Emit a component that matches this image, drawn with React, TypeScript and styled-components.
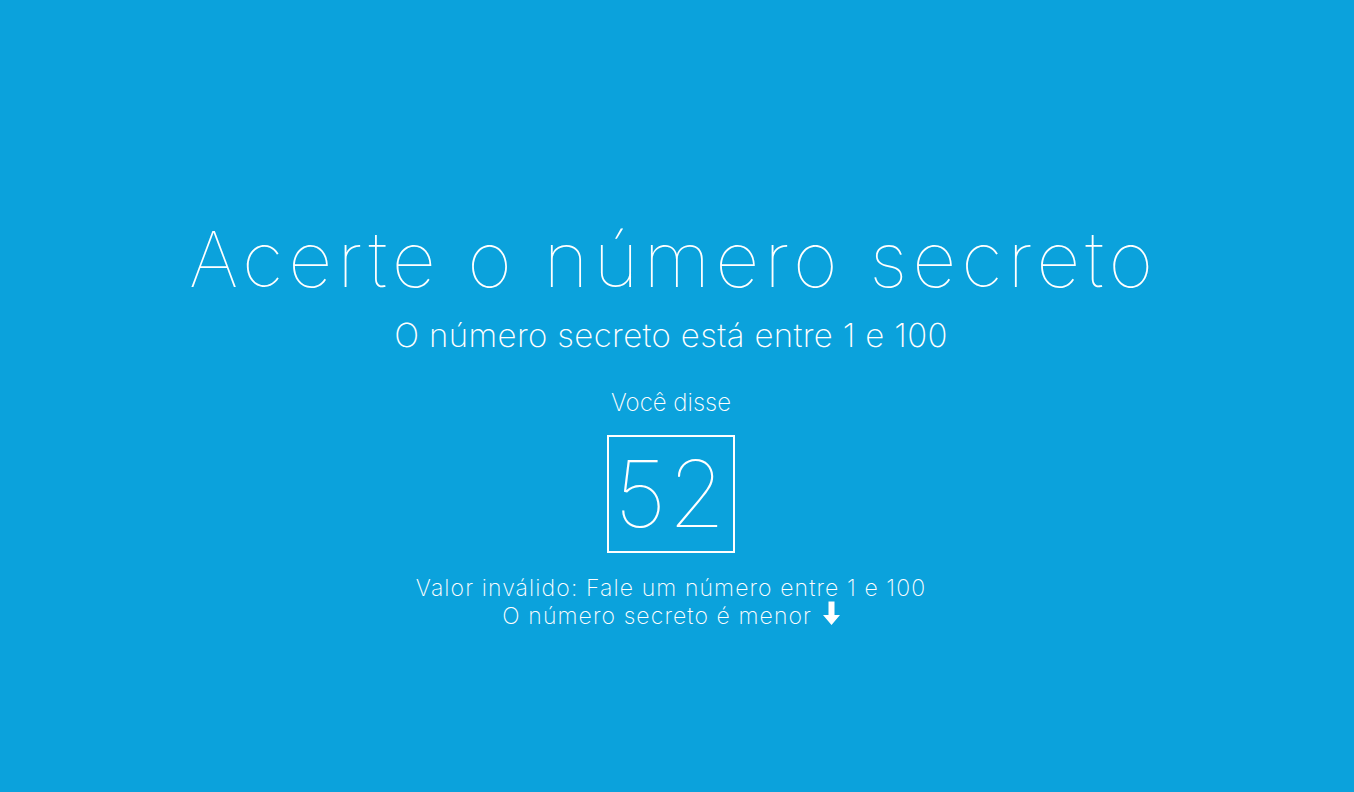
import React from "react";
import styled, { createGlobalStyle } from "styled-components";

const Global = createGlobalStyle`
  html, body { margin: 0; padding: 0; }
  body {
    background: #0ba2dc;
    color: #ffffff;
    font-family: Inter, "Noto Sans", sans-serif;
  }
`;

const Page = styled.main`
  height: 792px;
  display: flex;
  flex-direction: column;
  align-items: center;
  padding: 214px 12px 0 0;
  box-sizing: border-box;
`;

const Title = styled.h1`
  margin: 0;
  font-size: 77px;
  font-weight: 100;
  line-height: 90px;
  letter-spacing: 5px;
  margin-right: -5px;
`;

const Subtitle = styled.h3`
  margin: 11px 0 0;
  font-size: 33px;
  font-weight: 200;
  line-height: 40px;
  letter-spacing: 0.35px;
`;

const Said = styled.div`
  margin-top: 33px;
  font-size: 24px;
  font-weight: 200;
  line-height: 30px;
`;

const GuessBox = styled.div`
  margin-top: 17px;
  width: 124px;
  height: 114px;
  border: 2px solid #ffffff;
  display: flex;
  align-items: center;
  justify-content: center;
  font-size: 92px;
  line-height: 92px;
  font-weight: 100;
  letter-spacing: 2px;
`;

const Hint = styled.div`
  margin-top: 22px;
  display: flex;
  flex-direction: column;
  align-items: center;
  font-size: 23px;
  font-weight: 200;
  letter-spacing: 1.1px;
`;

const HintLine = styled.div`
  height: 26px;
  line-height: 26px;
  white-space: nowrap;
`;

const ArrowIcon = styled.svg`
  margin-left: 3px;
  vertical-align: -1px;
`;

const Arrow = () => (
  <ArrowIcon width="17" height="24" viewBox="0 0 17 24">
    <path d="M5.5 0.5h6v13.5h5.5l-8.5 10l-8.5-10h5.5z" fill="#ffffff" />
  </ArrowIcon>
);

export default function App() {
  return (
    <>
      <Global />
      <Page>
        <Title>Acerte o número secreto</Title>
        <Subtitle>O número secreto está entre 1 e 100</Subtitle>
        <Said>Você disse</Said>
        <GuessBox>52</GuessBox>
        <Hint>
          <HintLine>Valor inválido: Fale um número entre 1 e 100</HintLine>
          <HintLine>
            O número secreto é menor <Arrow />
          </HintLine>
        </Hint>
      </Page>
    </>
  );
}
